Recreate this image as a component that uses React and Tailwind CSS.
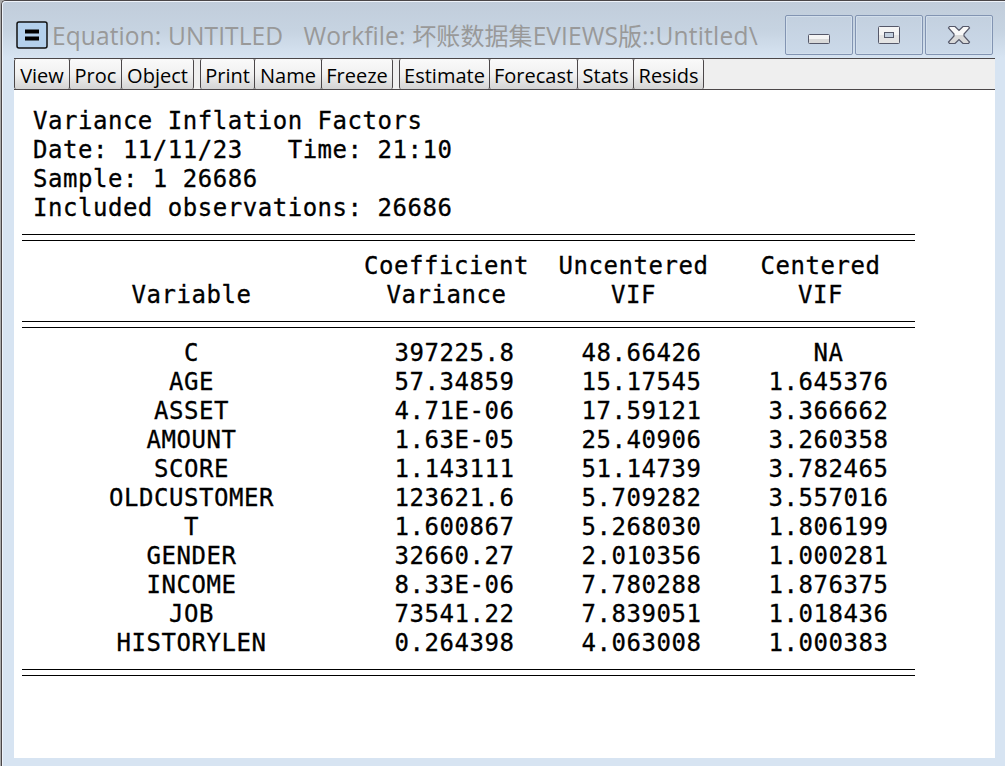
const TOOL_GROUPS = [
  [["View", "w-[56px]"], ["Proc", "w-[53px]"], ["Object", "w-[73px]"]],
  [["Print", "w-[55px]"], ["Name", "w-[68px]"], ["Freeze", "w-[72px]"]],
  [["Estimate", "w-[91px]"], ["Forecast", "w-[89px]"], ["Stats", "w-[57px]"], ["Resids", "w-[71px]"]],
];

const ROWS = [
  ["C", "397225.8", "48.66426", "NA"],
  ["AGE", "57.34859", "15.17545", "1.645376"],
  ["ASSET", "4.71E-06", "17.59121", "3.366662"],
  ["AMOUNT", "1.63E-05", "25.40906", "3.260358"],
  ["SCORE", "1.143111", "51.14739", "3.782465"],
  ["OLDCUSTOMER", "123621.6", "5.709282", "3.557016"],
  ["T", "1.600867", "5.268030", "1.806199"],
  ["GENDER", "32660.27", "2.010356", "1.000281"],
  ["INCOME", "8.33E-06", "7.780288", "1.876375"],
  ["JOB", "73541.22", "7.839051", "1.018436"],
  ["HISTORYLEN", "0.264398", "4.063008", "1.000383"],
];

const COLS = "grid w-[900px] grid-cols-[339px_187px_187px_187px] text-center";

function Rule() {
  return (
    <div className="flex h-[29px] items-center">
      <div className="h-[7px] w-full border-y border-black" />
    </div>
  );
}

function Heading({ children }) {
  return <span className="pr-[16px]">{children}</span>;
}

function CaptionButton({ children }) {
  return (
    <div className="flex h-[40px] w-[68px] items-center justify-center rounded-[2px] border border-[#8294b2] bg-linear-to-b from-[#c3d0df] to-[#cbd9e9] shadow-[inset_0_0_0_1px_#d3dfec]">
      {children}
    </div>
  );
}

function TitleBar() {
  return (
    <div className="flex h-[56px] items-start bg-linear-to-b from-[#c1cddb] via-[#c6d3e1] to-[#d7e4f2] pl-[14px]">
      <svg className="mt-[19px] shrink-0" width="32" height="28" viewBox="0 0 32 28">
        <rect x="1" y="1" width="30" height="26" rx="2" fill="#b4d0ec" stroke="#111" strokeWidth="1.5" />
        <path d="M9 10.500h14M9 17.500h14" stroke="#000" strokeWidth="4" />
      </svg>
      <div className="ml-[4px] mt-[17px] whitespace-pre font-['Open_Sans','Noto_Sans_CJK_SC',sans-serif] text-[24.550px] leading-[34px] tracking-[0.080px] text-[#999] [word-spacing:0.3px]">
        Equation: UNTITLED   Workfile: <span className="text-[24px]">坏账数据集</span>EVIEWS<span className="text-[24px]">版</span><span className="tracking-[0.2px]">::Untitled\</span>
      </div>
      <div className="ml-auto mr-[12px] mt-[13px] flex gap-[2px]">
        <CaptionButton>
          <svg className="mt-[8px]" width="22" height="10">
            <rect x=".5" y=".5" width="21" height="9" rx="1" fill="#f4f4f4" stroke="#555869" />
            <rect x="1" y="5" width="20" height="4" fill="#d9d9d9" />
          </svg>
        </CaptionButton>
        <CaptionButton>
          <svg width="22" height="18">
            <rect x=".5" y=".5" width="21" height="17" rx="1" fill="#f4f4f4" stroke="#555869" />
            <rect x="1" y="9" width="20" height="8" fill="#e4e4e4" />
            <rect x="6.500" y="6.500" width="9" height="5" fill="#c3d0df" stroke="#555869" />
          </svg>
        </CaptionButton>
        <CaptionButton>
          <svg width="24" height="18" viewBox="-1 0 24 18">
            <defs>
              <linearGradient id="closeFill" x1="0" y1="0" x2="0" y2="1">
                <stop offset=".5" stopColor="#f8f8f8" />
                <stop offset=".5" stopColor="#d9d9d9" />
              </linearGradient>
            </defs>
            <path d="M1.500 .5H7l4 4 4-4h5.500l1 1.500-5.500 6v2l5.500 6-1 1.500H15l-4-4-4 4H1.500l-1-1.500L6 10V8L.5 2z" fill="url(#closeFill)" stroke="#555869" strokeWidth="1.200" />
          </svg>
        </CaptionButton>
      </div>
    </div>
  );
}

export default function App() {
  return (
    <div className="h-[766px] w-[1005px] overflow-hidden bg-[#aaa]">
      <div className="ml-px h-[780px] rounded-tl-[5px] border-l border-t border-[#4a4648] bg-[#d7e4f2]">
        <div className="h-full overflow-hidden rounded-tl-[4px] border-l border-t border-[#eef3fa]">
          <div className="-ml-px"><TitleBar /></div>
          <div className="ml-[11px] w-[981px]">
            <div className="flex h-[32px] gap-[7px] border-y border-[#4b4749] bg-[#efefef] font-['Open_Sans',sans-serif] text-[20px] text-black">
              {TOOL_GROUPS.map((group, g) => (
                <div key={g} className="flex">
                  {group.map(([label, width]) => (
                    <div key={label} className={`${width} -mr-px flex items-center justify-center rounded-[2px] border-x border-[#4b4749] bg-linear-to-b from-[#fafafa] via-[#f1f1f1] to-[#d4d4d4] pt-[3px]`}>
                      <span>{label}</span>
                    </div>
                  ))}
                </div>
              ))}
            </div>
            <div className="h-[668px] bg-white pl-[8px] pt-[17px] font-['DejaVu_Sans_Mono',monospace] text-[24px] leading-[29px] tracking-[0.530px] text-black [-webkit-text-stroke:0.3px_black]">
              <div className="w-[893px]">
                <div className="whitespace-pre pl-[11px]">
                  <p>Variance Inflation Factors</p>
                  <p>Date: 11/11/23   Time: 21:10</p>
                  <p>Sample: 1 26686</p>
                  <p>Included observations: 26686</p>
                </div>
                <Rule />
                <div className={COLS}>
                  <span /><Heading>Coefficient</Heading><Heading>Uncentered</Heading><Heading>Centered</Heading>
                  <span>Variable</span><Heading>Variance</Heading><Heading>VIF</Heading><Heading>VIF</Heading>
                </div>
                <Rule />
                {ROWS.map((row) => (
                  <div key={row[0]} className={COLS}>
                    {row.map((cell, i) => <span key={i}>{cell}</span>)}
                  </div>
                ))}
                <Rule />
              </div>
            </div>
          </div>
        </div>
      </div>
    </div>
  );
}
